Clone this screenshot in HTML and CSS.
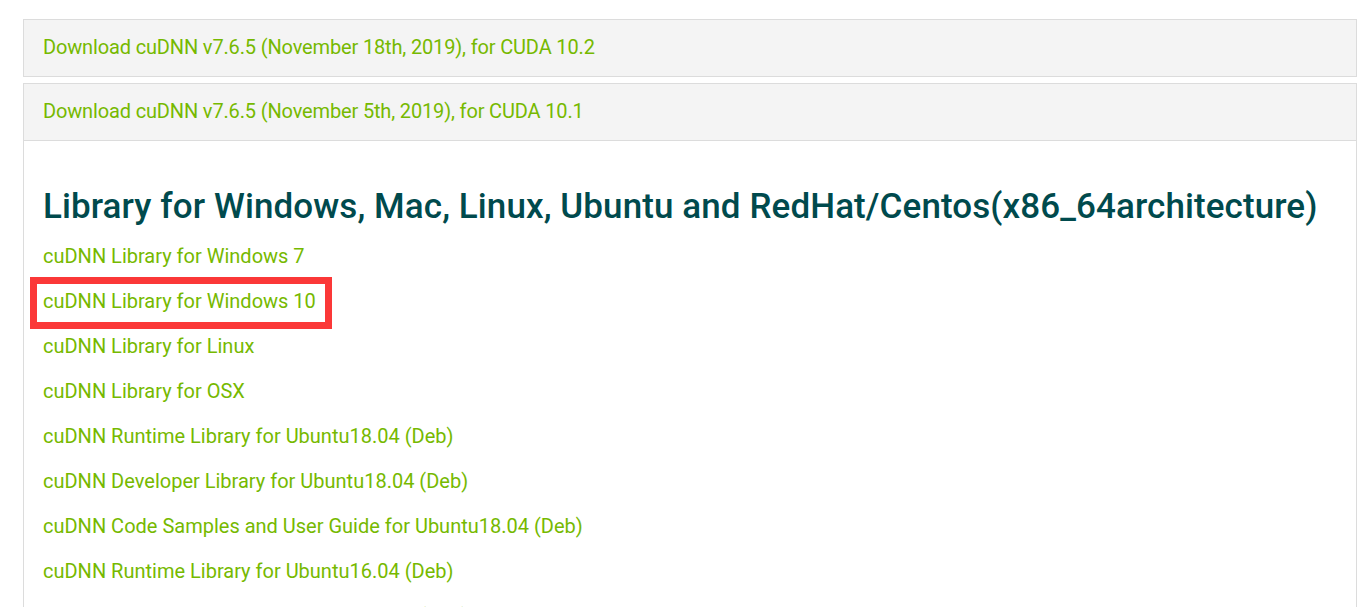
FILE: index.html
```html
<!DOCTYPE html>
<html lang="en">
<head>
<meta charset="utf-8">
<title>cuDNN Download</title>
<link rel="stylesheet" href="styles.css">
</head>
<body>
<div class="accordion">
  <div class="panel">
    <div class="panel-heading"><a class="link" href="#">Download cuDNN v7.6.5 (November 18th, 2019), for CUDA 10.2</a></div>
  </div>
  <div class="panel open">
    <div class="panel-heading"><a class="link" href="#">Download cuDNN v7.6.5 (November 5th, 2019), for CUDA 10.1</a></div>
    <div class="panel-body">
      <h2 class="title">Library for Windows, Mac, Linux, Ubuntu and RedHat/Centos(x86_64architecture)</h2>
      <ul class="links">
        <li><a class="link" href="#">cuDNN Library for Windows 7</a></li>
        <li class="highlight"><a class="link" href="#">cuDNN Library for Windows 10</a></li>
        <li><a class="link" href="#">cuDNN Library for Linux</a></li>
        <li><a class="link" href="#">cuDNN Library for OSX</a></li>
        <li><a class="link" href="#">cuDNN Runtime Library for Ubuntu18.04 (Deb)</a></li>
        <li><a class="link" href="#">cuDNN Developer Library for Ubuntu18.04 (Deb)</a></li>
        <li><a class="link" href="#">cuDNN Code Samples and User Guide for Ubuntu18.04 (Deb)</a></li>
        <li><a class="link" href="#">cuDNN Runtime Library for Ubuntu16.04 (Deb)</a></li>
        <li><a class="link" href="#">cuDNN Developer Library for Ubuntu16.04 (Deb)</a></li>
      </ul>
    </div>
  </div>
</div>
</body>
</html>
```
FILE: styles.css
```css
html, body {
  margin: 0;
  padding: 0;
  background: #ffffff;
  overflow: hidden;
}
body {
  font-family: Roboto, "Liberation Sans", sans-serif;
}
.accordion {
  margin: 19px 0 0 23px;
}
.panel {
  border: 1px solid #dcdcdc;
  margin-bottom: 6px;
}
.panel.open {
  border-bottom: none;
}
.panel-heading {
  background: #f4f4f4;
  padding: 15px 19px 17px;
  line-height: 24px;
  font-size: 20px;
}
.panel-heading .link {
  letter-spacing: -0.15px;
}
.panel.open .panel-heading {
  border-bottom: 1px solid #dcdcdc;
}
.link {
  color: #76b900;
  text-decoration: none;
  font-size: 20px;
}
.panel-body {
  background: #ffffff;
  padding: 44px 19px 0;
}
.title {
  margin: 0 0 5px;
  font-size: 35px;
  line-height: 44px;
  font-weight: 500;
  letter-spacing: 0.09px;
  color: #004a4d;
  white-space: nowrap;
}
.links {
  list-style: none;
  margin: 0;
  padding: 0;
}
.links li {
  line-height: 45px;
  height: 45px;
}
.links li.highlight {
  position: relative;
}
.links li.highlight::after {
  content: "";
  position: absolute;
  left: -13px;
  top: -2px;
  width: 288px;
  height: 38px;
  border: 7px solid #fb3838;
  pointer-events: none;
}
```
